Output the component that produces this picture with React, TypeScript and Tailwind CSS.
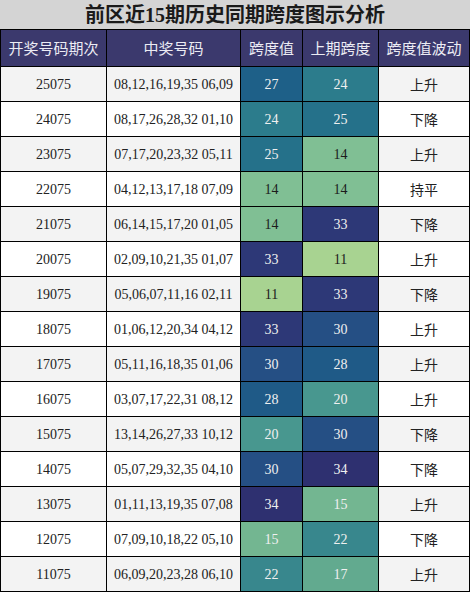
import React from 'react';

type Row = { period: string; nums: string; span: number; prev: number; trend: string };

const rows: Row[] = [
  { period: '25075', nums: '08,12,16,19,35 06,09', span: 27, prev: 24, trend: '上升' },
  { period: '24075', nums: '08,17,26,28,32 01,10', span: 24, prev: 25, trend: '下降' },
  { period: '23075', nums: '07,17,20,23,32 05,11', span: 25, prev: 14, trend: '上升' },
  { period: '22075', nums: '04,12,13,17,18 07,09', span: 14, prev: 14, trend: '持平' },
  { period: '21075', nums: '06,14,15,17,20 01,05', span: 14, prev: 33, trend: '下降' },
  { period: '20075', nums: '02,09,10,21,35 01,07', span: 33, prev: 11, trend: '上升' },
  { period: '19075', nums: '05,06,07,11,16 02,11', span: 11, prev: 33, trend: '下降' },
  { period: '18075', nums: '01,06,12,20,34 04,12', span: 33, prev: 30, trend: '上升' },
  { period: '17075', nums: '05,11,16,18,35 01,06', span: 30, prev: 28, trend: '上升' },
  { period: '16075', nums: '03,07,17,22,31 08,12', span: 28, prev: 20, trend: '上升' },
  { period: '15075', nums: '13,14,26,27,33 10,12', span: 20, prev: 30, trend: '下降' },
  { period: '14075', nums: '05,07,29,32,35 04,10', span: 30, prev: 34, trend: '下降' },
  { period: '13075', nums: '01,11,13,19,35 07,08', span: 34, prev: 15, trend: '上升' },
  { period: '12075', nums: '07,09,10,18,22 05,10', span: 15, prev: 22, trend: '下降' },
  { period: '11075', nums: '06,09,20,23,28 06,10', span: 22, prev: 17, trend: '上升' },
];

// colour scale for the span values
const cellStyle: Record<number, string> = {
  11: 'bg-[#a8d391] text-[#1c1c1c]',
  14: 'bg-[#80bf94] text-[#1c1c1c]',
  15: 'bg-[#73b691] text-[#f0f0f0]',
  17: 'bg-[#62aa8f] text-[#f0f0f0]',
  20: 'bg-[#48978f] text-[#f0f0f0]',
  22: 'bg-[#38878d] text-[#f0f0f0]',
  24: 'bg-[#2c7c8c] text-[#f0f0f0]',
  25: 'bg-[#25718a] text-[#f0f0f0]',
  27: 'bg-[#1e6088] text-[#f0f0f0]',
  28: 'bg-[#1f5a87] text-[#f0f0f0]',
  30: 'bg-[#254f84] text-[#f0f0f0]',
  33: 'bg-[#2d3877] text-[#f0f0f0]',
  34: 'bg-[#2e3070] text-[#f0f0f0]',
};

const headers = ['开奖号码期次', '中奖号码', '跨度值', '上期跨度', '跨度值波动'];

const serif = { fontFamily: '"Liberation Serif", "Noto Sans CJK SC", serif' };

export default function App() {
  return (
    <div className="w-[470px] h-[592px] bg-black overflow-hidden" style={serif}>
      <div className="h-[29px] bg-[#d4d4d4] flex items-center justify-center text-[20px] font-bold text-[#1a1a1a] leading-none">
        前区近15期历史同期跨度图示分析
      </div>
      <div className="grid grid-cols-[105px_133px_61px_75px_90px] gap-px p-px">
        {headers.map((h) => (
          <div
            key={h}
            className="h-[36px] bg-[#3b396d] text-[#ececf4] text-[15px] flex items-center justify-center"
            style={{ fontFamily: '"Noto Sans CJK SC", sans-serif' }}
          >
            {h}
          </div>
        ))}
        {rows.map((r, i) => {
          const bg = i % 2 === 0 ? 'bg-[#f3f3f3]' : 'bg-white';
          return (
            <React.Fragment key={r.period}>
              <div className={`${bg} h-[34px] flex items-center justify-center text-[14px] text-[#222]`}>
                {r.period}
              </div>
              <div className={`${bg} h-[34px] flex items-center justify-center text-[14px] text-[#222]`}>
                {r.nums}
              </div>
              <div className={`${cellStyle[r.span]} h-[34px] flex items-center justify-center text-[14px]`}>
                {r.span}
              </div>
              <div className={`${cellStyle[r.prev]} h-[34px] flex items-center justify-center text-[14px]`}>
                {r.prev}
              </div>
              <div
                className={`${bg} h-[34px] flex items-center justify-center text-[14px] text-[#222]`}
                style={{ fontFamily: '"Noto Sans CJK SC", sans-serif' }}
              >
                {r.trend}
              </div>
            </React.Fragment>
          );
        })}
      </div>
    </div>
  );
}
